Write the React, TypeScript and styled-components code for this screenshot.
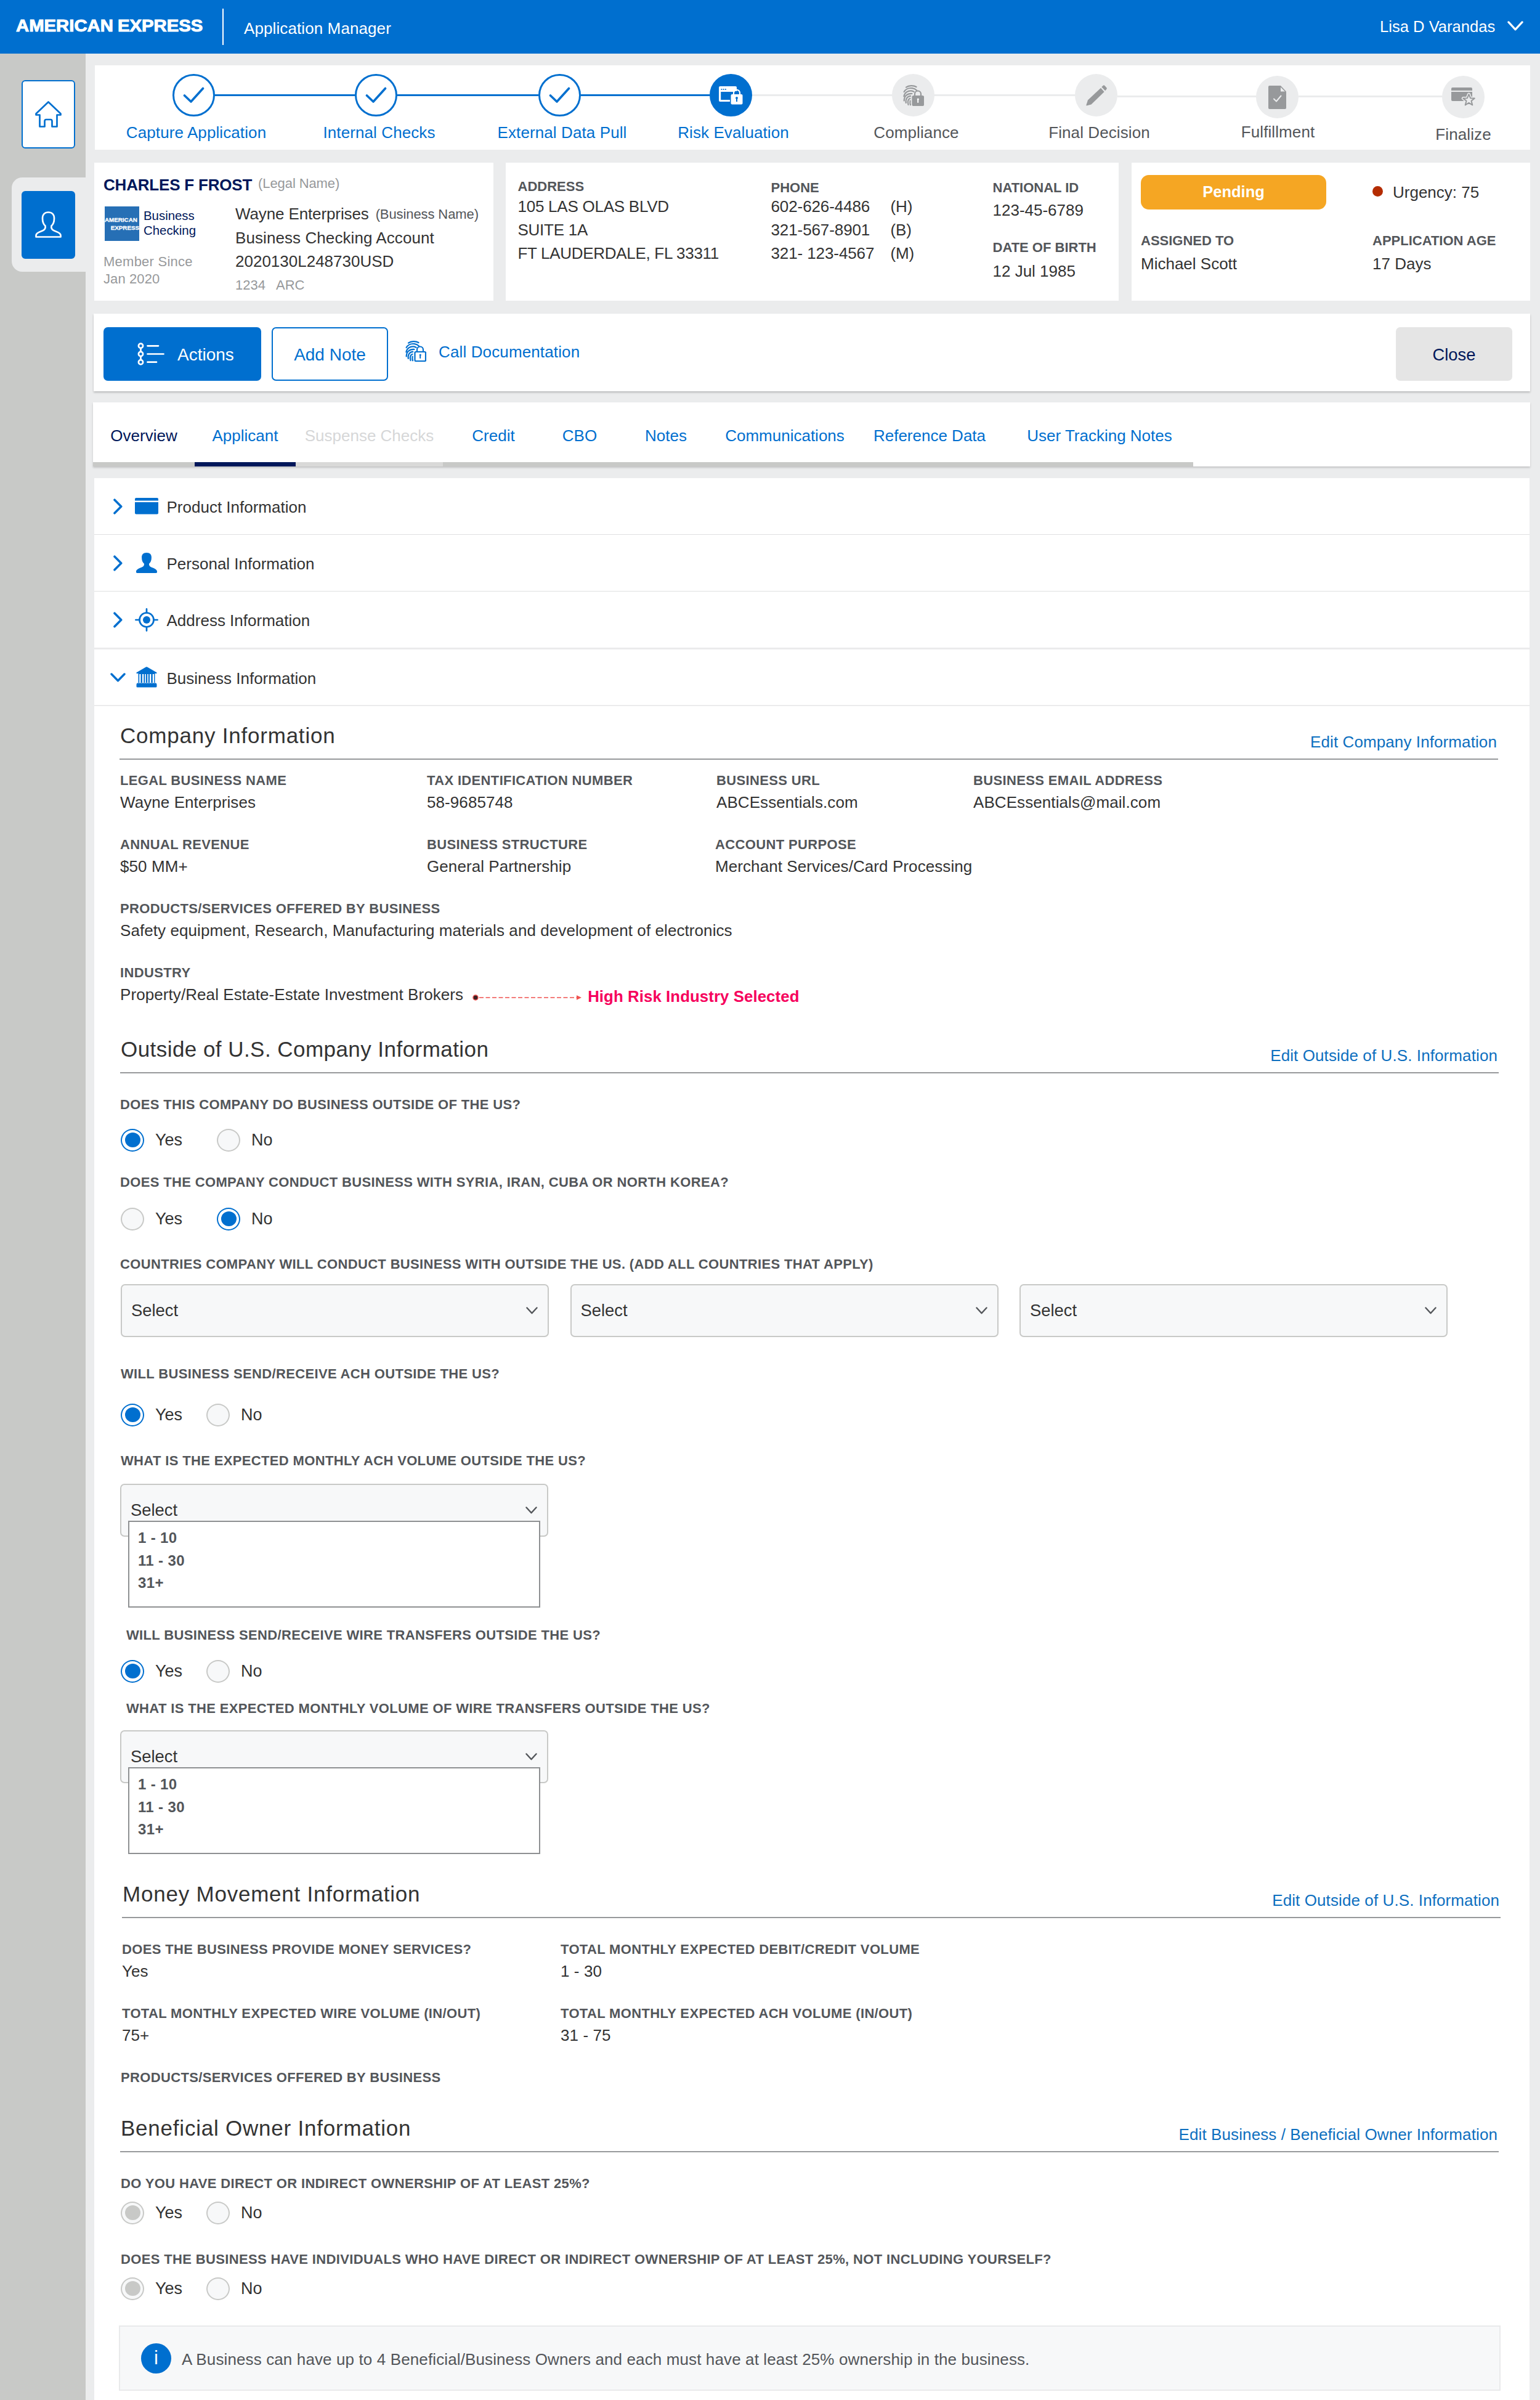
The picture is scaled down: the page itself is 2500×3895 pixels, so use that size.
import React from 'react';
import styled, { createGlobalStyle, css } from 'styled-components';

const c = {
  blue: '#006fcf',
  navy: '#00175a',
  link: '#0d6fbf',
  text: '#333333',
  label: '#53565a',
  muted: '#97999b',
  page: '#ebeced',
  rail: '#c8c9c7',
  field: '#f7f8f9',
  amber: '#f5a623',
  alert: '#f6005c',
};

const GlobalStyle = createGlobalStyle`
  * { box-sizing: border-box; }
  html, body { margin: 0; padding: 0; }
  body {
    width: 2500px;
    background: ${c.page};
    color: ${c.text};
    font-family: "Liberation Sans", Arial, Helvetica, sans-serif;
    font-size: 26px;
    line-height: 30px;
  }
  svg { display: block; flex: none; }
`;

const Page = styled.div`
  display: flex;
  flex-direction: column;
  width: 2500px;
  height: 3895px;
  overflow: hidden;
`;

/* ---------- header ---------- */

const Header = styled.header`
  display: flex;
  flex: none;
  height: 87px;
  padding-left: 26px;
  background: ${c.blue};
  color: #fff;
`;

const Wordmark = styled.div`
  width: 335px;
  line-height: 85px;
  font-size: 27px;
  font-weight: 700;
  white-space: nowrap;
  transform: scaleX(1.085);
  transform-origin: left;
  -webkit-text-stroke: 1px #fff;
  word-spacing: -1px;
`;

const HeaderRule = styled.div`
  width: 2px;
  height: 59px;
  margin-top: 14px;
  background: #fff;
`;

const AppName = styled.div`
  flex: 1;
  padding-left: 33px;
  line-height: 93px;
  letter-spacing: 0.1px;
`;

const UserMenu = styled.div`
  display: flex;
  width: 260px;
  font-size: 25.6px;
  line-height: 86px;
  white-space: nowrap;
  svg { margin: 34px 0 0 20px; }
`;

/* ---------- shell ---------- */

const Body = styled.div`
  display: flex;
  flex: 1;
  min-height: 0;
`;

const Sidebar = styled.nav`
  display: flex;
  flex-direction: column;
  align-items: flex-end;
  width: 139px;
  padding-top: 43px;
  background: ${c.rail};
`;

const RailButton = styled.div<{ $filled?: boolean }>`
  display: flex;
  align-items: center;
  justify-content: center;
  width: 87px;
  height: ${p => (p.$filled ? 110 : 111)}px;
  margin-right: 17px;
  border: 2px solid ${c.blue};
  border-radius: 6px;
  background: ${p => (p.$filled ? c.blue : '#fff')};
`;

const RailTab = styled.div`
  display: flex;
  align-items: center;
  justify-content: flex-end;
  width: 120px;
  height: 153px;
  margin-top: 47px;
  border-radius: 17px 0 0 17px;
  background: ${c.page};
`;

const Main = styled.main`
  display: flex;
  flex: 1;
  flex-direction: column;
  min-width: 0;
  padding: 19px 16px 0 12px;
`;

/* ---------- progress steps ---------- */

const StepsCard = styled.section`
  display: flex;
  flex: none;
  height: 137px;
  margin-left: 3px;
  padding: 14px 0 0 126px;
  background: #fff;
`;

type StepState = 'done' | 'current' | 'todo';

const StepItem = styled.div<{ $drop?: number }>`
  display: flex;
  flex: none;
  flex-direction: column;
  align-items: center;
  width: 69px;
  margin-top: ${p => p.$drop || 0}px;
`;

const StepCircle = styled.div<{ $state: StepState }>`
  display: flex;
  flex: none;
  align-items: center;
  justify-content: center;
  width: 69px;
  height: 69px;
  border-radius: 50%;
  border: ${p => (p.$state === 'todo' ? 'none' : `3px solid ${c.blue}`)};
  background: ${p => ({ done: '#fff', current: c.blue, todo: '#ebeced' })[p.$state]};
`;

const StepLabel = styled.div<{ $state: StepState; $nudge: number; $gap: number }>`
  margin-top: ${p => p.$gap}px;
  margin-left: ${p => p.$nudge * 2}px;
  color: ${p => (p.$state === 'todo' ? c.label : c.blue)};
  letter-spacing: 0.1px;
  white-space: nowrap;
`;

const Connector = styled.div<{ $w: number; $done?: boolean; $drop?: number }>`
  flex: none;
  width: ${p => p.$w}px;
  height: 3px;
  margin-top: ${p => 33 + (p.$drop || 0)}px;
  background: ${p => (p.$done ? c.blue : '#ebeced')};
`;

/* ---------- summary cards ---------- */

const Summary = styled.section`
  display: flex;
  flex: none;
  height: 224px;
  margin: 21px 0 0 2px;
`;

const Card = styled.div<{ $w: number; $pad: number; $ml?: number; $row?: boolean }>`
  display: flex;
  flex: none;
  flex-direction: ${p => (p.$row ? 'row' : 'column')};
  width: ${p => p.$w}px;
  margin-left: ${p => p.$ml || 0}px;
  padding-left: ${p => p.$pad}px;
  background: #fff;
`;

const Row = styled.div`
  display: flex;
`;

const Column = styled.div<{ $w: number }>`
  flex: none;
  width: ${p => p.$w}px;
`;

const Line = styled.div<{ $mt?: number; $ml?: number; $lh?: number; $ls?: number }>`
  margin-top: ${p => p.$mt || 0}px;
  margin-left: ${p => p.$ml || 0}px;
  line-height: ${p => p.$lh || 30}px;
  letter-spacing: ${p => p.$ls || 0}px;
  white-space: nowrap;
`;

const Name = styled(Line)`
  color: ${c.navy};
  font-weight: 700;
`;

const Small = styled(Line)<{ $dark?: boolean }>`
  color: ${p => (p.$dark ? c.label : c.muted)};
  font-size: 22px;
`;

const Caption = styled(Line)`
  color: ${c.label};
  font-size: 22px;
  font-weight: 700;
`;

const PhoneLine = styled(Line)`
  display: grid;
  grid-template-columns: 194px auto;
`;

const LogoRow = styled.div`
  display: flex;
  height: 56px;
  margin: 20px 0 0 2px;
`;

const BlueBox = styled.div`
  display: flex;
  flex-direction: column;
  justify-content: center;
  width: 56px;
  height: 56px;
  background: #266fb5;
  color: #fff;
  font-size: 9.8px;
  font-weight: 700;
  line-height: 13px;
  -webkit-text-stroke: 0.3px #fff;
  span:last-child { text-align: right; }
`;

const ProductName = styled.div`
  margin: 4px 0 0 7px;
  color: ${c.navy};
  font-size: 20.4px;
  line-height: 23.5px;
`;

const StatusPill = styled.div`
  width: 301px;
  height: 56px;
  border-radius: 13px;
  background: ${c.amber};
  color: #fff;
  font-size: 25.5px;
  font-weight: 700;
  line-height: 55px;
  text-align: center;
`;

const StatusGrid = styled.div`
  display: grid;
  grid-template-columns: 376px auto;
  padding-top: 20px;
`;

const Urgency = styled.div`
  display: flex;
  align-items: center;
  height: 55px;
`;

const Dot = styled.div`
  width: 17px;
  height: 17px;
  margin: -2px 16px 0 0;
  border-radius: 50%;
  background: #b42c01;
`;

/* ---------- toolbar ---------- */

const Toolbar = styled.section`
  display: flex;
  flex: none;
  height: 126px;
  margin: 21px 0 0 1px;
  padding: 22px 29px 0 16px;
  background: #fff;
  box-shadow: 0 2px 3px rgba(0, 0, 0, 0.22);
`;

const Button = styled.div<{ $w: number; $kind: 'primary' | 'outline' | 'quiet' }>`
  display: flex;
  align-items: center;
  justify-content: center;
  flex: none;
  width: ${p => p.$w}px;
  height: 87px;
  border-radius: 7px;
  font-size: 28px;
  line-height: 32px;
  ${p =>
    ({
      primary: css`
        justify-content: flex-start;
        gap: 21px;
        padding-left: 55px;
        background: ${c.blue};
        color: #fff;
      `,
      outline: css`
        margin-left: 17px;
        border: 2px solid ${c.blue};
        background: #fff;
        color: ${c.blue};
      `,
      quiet: css`
        margin-left: auto;
        background: #e5e5e5;
        color: ${c.navy};
        font-size: 27.3px;
      `,
    })[p.$kind]}
  span { margin-top: 2px; }
`;

const ToolLink = styled.div`
  display: flex;
  height: 34px;
  margin: 22px 0 0 28px;
  color: ${c.blue};
  span {
    margin: 3px 0 0 20px;
    letter-spacing: 0.13px;
  }
`;

/* ---------- tabs ---------- */

const Tabs = styled.nav`
  display: flex;
  flex: none;
  height: 104px;
  margin-top: 18px;
  background: #fff;
  box-shadow: 0 2px 3px rgba(0, 0, 0, 0.18);
`;

type TabTone = 'link' | 'visited' | 'active' | 'disabled';

const Tab = styled.div<{ $w: number; $tone: TabTone }>`
  flex: none;
  width: ${p => p.$w}px;
  height: 104px;
  padding-top: 39px;
  border-bottom: 7px solid
    ${p => ({ link: c.rail, visited: c.rail, active: c.navy, disabled: '#d9d9d8' })[p.$tone]};
  color: ${p => ({ link: c.blue, visited: c.navy, active: c.blue, disabled: '#d6d7d8' })[p.$tone]};
  text-align: center;
  white-space: nowrap;
`;

/* ---------- accordion panel ---------- */

const Panel = styled.section`
  display: flex;
  flex: 1;
  flex-direction: column;
  min-height: 0;
  margin: 19px 1px 0 2px;
  background: #fff;
`;

const AccordionRow = styled.div<{ $h: number; $line: number }>`
  display: flex;
  flex: none;
  align-items: center;
  height: ${p => p.$h}px;
  padding-left: 26px;
  border-bottom: ${p => p.$line}px solid ${p => (p.$line === 1 ? '#dfe0e1' : '#ebebec')};
`;

const IconSlot = styled.div<{ $w: number; $gap: number }>`
  display: flex;
  justify-content: center;
  width: ${p => p.$w}px;
  margin-right: ${p => p.$gap}px;
`;

const AccordionTitle = styled.div`
  margin-top: 3px;
`;

const Content = styled.div`
  display: flex;
  flex-direction: column;
  padding: 23px 0 0 42px;
`;

const SectionHead = styled.div<{ $mt?: number; $ml?: number }>`
  display: flex;
  justify-content: space-between;
  width: 2238px;
  height: 64px;
  margin: ${p => p.$mt || 0}px 0 0 ${p => p.$ml || 0}px;
  border-bottom: 2px solid #97999b;
`;

const SectionTitle = styled.h2<{ $ls: number }>`
  margin: 7px 0 0 1px;
  font-size: 35px;
  font-weight: 400;
  line-height: 36px;
  letter-spacing: ${p => p.$ls}px;
`;

const EditLink = styled.a`
  margin-top: 20px;
  margin-right: 2px;
  color: ${c.link};
  letter-spacing: 0.1px;
`;

const FieldRow = styled.div<{ $mt: number; $cols: string; $ml?: number }>`
  display: grid;
  grid-template-columns: ${p => p.$cols};
  height: 65px;
  margin: ${p => p.$mt}px 0 0 ${p => p.$ml || 0}px;
`;

const FieldLabel = styled.div<{ $mt?: number; $ml?: number }>`
  margin: ${p => p.$mt || 0}px 0 0 ${p => p.$ml || 0}px;
  color: ${c.label};
  font-size: 22px;
  font-weight: 700;
  line-height: 28px;
  letter-spacing: 0.35px;
  white-space: nowrap;
`;

const FieldValue = styled.div`
  display: flex;
  height: 30px;
  margin-top: 6px;
  letter-spacing: 0.08px;
  white-space: nowrap;
`;

const RiskFlag = styled.span`
  display: flex;
  align-items: center;
  height: 36px;
  margin-left: 15px;
  color: ${c.alert};
  font-size: 25.8px;
  font-weight: 700;
  svg { margin: 4px 9px 0 0; }
`;

const Radios = styled.div<{ $mt: number }>`
  display: flex;
  height: 38px;
  margin: ${p => p.$mt}px 0 0 1px;
`;

const RadioOption = styled.div<{ $w?: number }>`
  display: flex;
  align-items: center;
  width: ${p => (p.$w ? `${p.$w}px` : 'auto')};
  font-size: 27px;
`;

const RadioMark = styled.span<{ $tone: 'on' | 'off' | 'locked' }>`
  display: flex;
  align-items: center;
  justify-content: center;
  width: 38px;
  height: 37px;
  margin-right: 18px;
  border: 2px solid ${p => (p.$tone === 'on' ? c.blue : c.rail)};
  border-radius: 50%;
  background: ${p => (p.$tone === 'on' ? '#fff' : c.field)};
  &::after {
    content: '';
    width: 25px;
    height: 24px;
    border-radius: 50%;
    background: ${p => ({ on: c.blue, off: 'transparent', locked: c.rail })[p.$tone]};
  }
`;

const SelectRow = styled.div<{ $mt: number; $ml?: number }>`
  display: flex;
  gap: 34.5px;
  margin: ${p => p.$mt}px 0 0 ${p => p.$ml || 0}px;
`;

const SelectBox = styled.div`
  position: relative;
  display: flex;
  align-items: center;
  justify-content: space-between;
  width: 695px;
  height: 86px;
  padding: 0 16px 1px 15px;
  border: 2px solid ${c.rail};
  border-radius: 7px;
  background: ${c.field};
  font-size: 27.4px;
`;

const OptionList = styled.ul`
  position: absolute;
  top: 58px;
  left: 11px;
  width: 669px;
  height: 141px;
  margin: 0;
  padding: 8px 0 0 14px;
  border: 2px solid #8e9092;
  background: #fff;
  color: ${c.label};
  font-size: 24px;
  font-weight: 700;
  line-height: 36.6px;
  letter-spacing: 0.35px;
  list-style: none;
`;

const Notice = styled.div`
  display: flex;
  align-items: center;
  width: 2243px;
  height: 106px;
  margin: 41px 0 0 -2px;
  padding-left: 34px;
  border: 2px solid #e9eaeb;
  background: ${c.field};
  color: ${c.label};
  span { margin: 4px 0 0 17px; letter-spacing: 0.12px; }
`;

const InfoBadge = styled.div`
  width: 49px;
  height: 49px;
  border-radius: 50%;
  background: ${c.blue};
  color: #fff;
  font-size: 31px;
  line-height: 48px;
  text-align: center;
`;

/* ---------- icons ---------- */

const CheckIcon = () => (
  <svg width="35" height="27" viewBox="0 0 35 27" fill="none" stroke={c.blue} strokeWidth="3.6" strokeLinecap="round" strokeLinejoin="round">
    <path d="M2.5 14 L13 24 L32.5 2.5" />
  </svg>
);

const BrowserLockIcon = () => (
  <svg width="39" height="30" viewBox="0 0 39 30">
    <path d="M2 0H27a2 2 0 0 1 2 2V8h-3V9H3.2V22H18v3H2a2 2 0 0 1-2-2V2a2 2 0 0 1 2-2Z" fill="#fff" />
    <g fill={c.blue}>
      <circle cx="4.5" cy="5" r="1.1" /><circle cx="7.7" cy="5" r="1.1" /><circle cx="10.9" cy="5" r="1.1" />
    </g>
    <path d="M24 14v-3.2a5 5 0 0 1 10 0V14" fill="none" stroke="#fff" strokeWidth="2.2" />
    <rect x="19.5" y="13" width="19" height="16.5" rx="2" fill="#fff" />
    <path d="M29 17a2 2 0 0 1 1 3.7V25h-2v-4.3a2 2 0 0 1 1-3.7Z" fill={c.blue} />
  </svg>
);

const FingerprintLockIcon = ({ color, solid }: { color: string; solid?: boolean }) => (
  <svg width="34" height="34" viewBox="0 0 34 34" fill="none" stroke={color} strokeWidth="2.2" strokeLinecap="round">
    <path d="M5 3.6C9 .6 17 .3 21.5 3" />
    <path d="M1.6 11C5 5.6 11 4.6 15 5.2c3 .4 5.3 1.7 7 3.3" />
    <path d="M1.4 18.5C2.6 12 8 9.2 13 9.4c2 .1 3.5.7 4.6 1.5" />
    <path d="M1.7 25.500C1.8 18 6.5 13.600 14.5 14" />
    <path d="M4.800 29C3.600 22.500 7 18 12.200 17.800" />
    <path d="M8.500 32C7 27 8 22.800 11.500 21.800" />
    <path d="M12 32.300C11.200 29.500 11.100 27.500 11.600 25.500" />
    <path d="M19 17.500v-3a5 5 0 0 1 10 0v3" />
    <rect x="15.500" y="18" width="17.500" height="15" rx="1.500" fill={solid ? color : '#fff'} />
    <path d="M24.200 23v5" stroke={solid ? '#fff' : color} strokeWidth="2" />
    <circle cx="24.200" cy="23" r="1" fill={solid ? '#fff' : color} stroke={solid ? '#fff' : color} strokeWidth="1" />
  </svg>
);

const PencilIcon = () => (
  <svg width="34" height="34" viewBox="0 0 34 34" fill={c.muted}>
    <path d="M24 4.800 29.600 11 8.500 31.500 1 33.500q-.8 0-.6-1L3 24.500Z" />
    <path d="M25.300 3.300 27.800.8q1.200-1 2.500.1l3 3.400q1 1.200 0 2.400L31.200 9.300Z" />
  </svg>
);

const DocCheckIcon = () => (
  <svg width="29" height="38" viewBox="0 0 29 38">
    <path d="M2 0H20L29 9.500V36a2 2 0 0 1-2 2H2a2 2 0 0 1-2-2V2A2 2 0 0 1 2 0Z" fill={c.muted} />
    <path d="M20 2.500V9.500H27Z" fill="#ebeced" />
    <path d="M9 21.500 13 25.500 20.500 16.500" fill="none" stroke="#ebeced" strokeWidth="2" strokeLinecap="round" strokeLinejoin="round" />
  </svg>
);

const starShape = 'M28.500 11 31 17.200 37.700 17.600 32.500 21.800 34.300 28.500 28.500 24.800 22.700 28.500 24.500 21.800 19.300 17.600 26 17.200Z';

const CardStarIcon = () => (
  <svg width="39" height="31" viewBox="0 0 39 31">
    <path d="M2 0H32a2 2 0 0 1 2 2V5H0V2A2 2 0 0 1 2 0Z" fill={c.muted} />
    <path d="M0 7H34V22H2a2 2 0 0 1-2-2Z" fill={c.muted} />
    <path d={starShape} fill="#ebeced" stroke="#ebeced" strokeWidth="5" strokeLinejoin="round" />
    <path d={starShape} fill="#ebeced" stroke={c.muted} strokeWidth="2" strokeLinejoin="round" />
  </svg>
);

const HomeIcon = () => (
  <svg width="43" height="43" viewBox="0 0 43 43" fill="none" stroke={c.blue} strokeWidth="2.700" strokeLinejoin="round" strokeLinecap="round">
    <path d="M21.500 1.500 41.500 20.500V22.500H35.500V41.500H27.500V32.500Q27.500 30 25 30H18Q15.500 30 15.500 32.500V41.500H7.500V22.500H1.500V20.500Z" />
  </svg>
);

const UserIcon = () => (
  <svg width="43" height="43" viewBox="0 0 43 43" fill="none" stroke="#fff" strokeWidth="2.700" strokeLinejoin="round">
    <path d="M21.500 1.500C15.500 1.500 12 5.500 12 11.500C12 17 13.500 21 16.500 23.500C17.500 28 15.500 30.500 9.500 32.500C4 34.500 1.500 36.500 1.500 39V41.500H41.500V39C41.500 36.500 39 34.500 33.500 32.500C27.500 30.500 25.500 28 26.500 23.500C29.500 21 31 17 31 11.500C31 5.500 27.500 1.500 21.500 1.500Z" />
  </svg>
);

const ListIcon = () => (
  <svg width="44" height="37" viewBox="0 0 44 37" fill="none" stroke="#fff" strokeWidth="2.700" strokeLinecap="round">
    <circle cx="5.500" cy="5.300" r="3.600" /><circle cx="5.500" cy="18.500" r="3.600" /><circle cx="5.500" cy="31.700" r="3.600" />
    <path d="M5.500 9.500V14.500M5.500 22.500V27.500M16.500 5.300H34M16.500 18.500H42.500M16.500 31.700H31" />
  </svg>
);

const ChevronRight = () => (
  <svg width="15" height="26" viewBox="0 0 15 26" fill="none" stroke={c.blue} strokeWidth="3.600" strokeLinecap="round" strokeLinejoin="round">
    <path d="M2 2.200 12.700 13 2 23.800" />
  </svg>
);

const ChevronDown = ({ w, h, color, stroke }: { w: number; h: number; color: string; stroke: number }) => (
  <svg width={w} height={h} viewBox={`0 0 ${w} ${h}`} fill="none" stroke={color} strokeWidth={stroke} strokeLinecap="round" strokeLinejoin="round">
    <path d={`M${stroke / 2 + 0.3} ${stroke / 2 + 0.3} L${w / 2} ${h - stroke / 2 - 0.5} L${w - stroke / 2 - 0.3} ${stroke / 2 + 0.3}`} />
  </svg>
);

const CardIcon = () => (
  <svg width="38" height="27" viewBox="0 0 38 27" fill={c.blue}>
    <path d="M2 0H36a2 2 0 0 1 2 2V4.500H0V2A2 2 0 0 1 2 0Z" />
    <path d="M0 7H38V24.500a2 2 0 0 1-2 2H2a2 2 0 0 1-2-2Z" />
  </svg>
);

const PersonIcon = () => (
  <svg width="34" height="33" viewBox="0 0 43 43" preserveAspectRatio="none" fill={c.blue}>
    <path d="M21.500 0C14.500 0 11.500 4 11.500 10C11.500 16 13 20 16.500 23.500C16.500 28 14.500 30 8.500 32C2.500 34.500 0 37 0 40V41.500Q0 43 2 43H41Q43 43 43 41.500V40C43 37 40.500 34.500 34.500 32C28.500 30 26.500 28 26.500 23.500C30 20 31.500 16 31.500 10C31.500 4 28.500 0 21.500 0Z" />
  </svg>
);

const TargetIcon = () => (
  <svg width="38" height="38" viewBox="0 0 38 38" fill="none" stroke={c.blue} strokeWidth="2.700" strokeLinecap="round">
    <circle cx="19" cy="19" r="11.500" />
    <circle cx="19" cy="19" r="6" fill={c.blue} stroke="none" />
    <path d="M19 1.400V7.500M19 30.500V36.600M1.400 19H7.500M30.500 19H36.600" />
  </svg>
);

const BankIcon = () => (
  <svg width="34" height="34" viewBox="0 0 34 34" fill={c.blue}>
    <path d="M17 .3Q17.600.2 18.500.7L33.500 9.500V11H30.500V26H3.500V11H.5V9.500L15.500.7Q16.400.2 17 .3Z" />
    <path d="M5.200 12h2.300v14H5.200zM10 12h2.300v14H10zM14.300 12h1.600v14h-1.600zM18.200 12h1.600v14h-1.600zM22 12h2.300v14H22zM26.800 12h2.300v14h-2.300z" fill="#fff" />
    <path d="M2 26.500H32Q33.500 27 33.500 29V32Q33.500 33.500 32 33.500H2Q.5 33.500.5 32V29Q.5 27 2 26.500Z" />
  </svg>
);

const RiskArrow = () => (
  <svg width="178" height="10" viewBox="0 0 178 10">
    <circle cx="5" cy="5" r="4" fill="#3a2326" stroke="#f0524f" strokeWidth="1.500" />
    <path d="M11 5H170" stroke="#f0524f" strokeWidth="1.600" strokeDasharray="7 3.500" />
    <path d="M169 1.200 177 5 169 8.800Z" fill="#f0524f" />
  </svg>
);

/* ---------- composed parts ---------- */

type Step = { label: string; state: StepState; icon: React.ReactNode; nudge: number; drop?: number; gap?: number; next?: number };

const steps: Step[] = [
  { label: 'Capture Application', state: 'done', icon: <CheckIcon />, nudge: 4, next: 227 },
  { label: 'Internal Checks', state: 'done', icon: <CheckIcon />, nudge: 5, next: 229 },
  { label: 'External Data Pull', state: 'done', icon: <CheckIcon />, nudge: 4, next: 209 },
  { label: 'Risk Evaluation', state: 'current', icon: <BrowserLockIcon />, nudge: 4, next: 227 },
  { label: 'Compliance', state: 'todo', icon: <FingerprintLockIcon color={c.muted} solid />, nudge: 5, next: 228 },
  { label: 'Final Decision', state: 'todo', icon: <PencilIcon />, nudge: 5, next: 225 },
  { label: 'Fulfillment', state: 'todo', icon: <DocCheckIcon />, nudge: 1, drop: 3, gap: 7, next: 233 },
  { label: 'Finalize', state: 'todo', icon: <CardStarIcon />, nudge: 0, drop: 3 },
];

const tabs: { label: string; w: number; tone: TabTone }[] = [
  { label: 'Overview', w: 165, tone: 'visited' },
  { label: 'Applicant', w: 164, tone: 'active' },
  { label: 'Suspense Checks', w: 239, tone: 'disabled' },
  { label: 'Credit', w: 164, tone: 'link' },
  { label: 'CBO', w: 116, tone: 'link' },
  { label: 'Notes', w: 164, tone: 'link' },
  { label: 'Communications', w: 222, tone: 'link' },
  { label: 'Reference Data', w: 248, tone: 'link' },
  { label: 'User Tracking Notes', w: 304, tone: 'link' },
];

const Field = ({ label, children }: { label: string; children?: React.ReactNode }) => (
  <div>
    <FieldLabel>{label}</FieldLabel>
    <FieldValue>{children}</FieldValue>
  </div>
);

const YesNo = ({ value, mt, wide, locked }: { value: 'Yes' | 'No'; mt: number; wide?: boolean; locked?: boolean }) => {
  const on = locked ? 'locked' : 'on';
  return (
    <Radios $mt={mt}>
      <RadioOption $w={wide ? 156 : 139}>
        <RadioMark $tone={value === 'Yes' ? on : 'off'} />
        Yes
      </RadioOption>
      <RadioOption>
        <RadioMark $tone={value === 'No' ? on : 'off'} />
        No
      </RadioOption>
    </Radios>
  );
};

const Select = ({ options }: { options?: string[] }) => (
  <SelectBox>
    Select
    <ChevronDown w={19} h={12} color={c.label} stroke={2.4} />
    {options && (
      <OptionList>
        {options.map(o => (
          <li key={o}>{o}</li>
        ))}
      </OptionList>
    )}
  </SelectBox>
);

const Head = ({ title, link, mt, ml, ls = 0.78 }: { title: string; link: string; mt?: number; ml?: number; ls?: number }) => (
  <SectionHead $mt={mt} $ml={ml}>
    <SectionTitle $ls={ls}>{title}</SectionTitle>
    <EditLink>{link}</EditLink>
  </SectionHead>
);

const AccordionItem = ({ icon, title, open, h = 92, line = 1 }: { icon: React.ReactNode; title: string; open?: boolean; h?: number; line?: number }) => (
  <AccordionRow $h={h} $line={line}>
    <IconSlot $w={24} $gap={14}>
      {open ? <ChevronDown w={25} h={15} color={c.blue} stroke={3.4} /> : <ChevronRight />}
    </IconSlot>
    <IconSlot $w={41} $gap={12.5}>{icon}</IconSlot>
    <AccordionTitle>{title}</AccordionTitle>
  </AccordionRow>
);

const volumes = ['1 - 10', '11 - 30', '31+'];

export default function App() {
  return (
    <Page>
      <GlobalStyle />
      <Header>
        <Wordmark>AMERICAN EXPRESS</Wordmark>
        <HeaderRule />
        <AppName>Application Manager</AppName>
        <UserMenu>
          Lisa D Varandas
          <ChevronDown w={26} h={16} color="#fff" stroke={3.2} />
        </UserMenu>
      </Header>

      <Body>
        <Sidebar>
          <RailButton><HomeIcon /></RailButton>
          <RailTab>
            <RailButton $filled><UserIcon /></RailButton>
          </RailTab>
        </Sidebar>

        <Main>
          <StepsCard>
            {steps.map((s, i) => (
              <React.Fragment key={s.label}>
                <StepItem $drop={s.drop}>
                  <StepCircle $state={s.state}>{s.icon}</StepCircle>
                  <StepLabel $state={s.state} $nudge={s.nudge} $gap={s.gap ?? 11}>{s.label}</StepLabel>
                </StepItem>
                {s.next && <Connector $w={s.next} $done={i < 3} $drop={i > 4 ? 2 : 0} />}
              </React.Fragment>
            ))}
          </StepsCard>

          <Summary>
            <Card $w={648} $pad={15}>
              <Row>
                <Name $mt={21} $ls={-0.2}>CHARLES F FROST</Name>
                <Small $mt={19} $ml={10} $ls={-0.1}>(Legal Name)</Small>
              </Row>
              <Row>
                <Column $w={214}>
                  <LogoRow>
                    <BlueBox><span>AMERICAN</span><span>EXPRESS</span></BlueBox>
                    <ProductName>Business<br />Checking</ProductName>
                  </LogoRow>
                  <Small $mt={20} $lh={28} $ls={0.25}>Member Since</Small>
                  <Small $lh={28} $ls={0.1}>Jan 2020</Small>
                </Column>
                <div>
                  <Row>
                    <Line $mt={17} $ls={-0.12}>Wayne Enterprises</Line>
                    <Small $mt={18} $ml={11} $ls={-0.1} $dark>(Business Name)</Small>
                  </Row>
                  <Line $mt={8} $ls={0.08}>Business Checking Account</Line>
                  <Line $mt={8}>2020130L248730USD</Line>
                  <Row>
                    <Small $mt={9}>1234</Small>
                    <Small $mt={9} $ml={17}>ARC</Small>
                  </Row>
                </div>
              </Row>
            </Card>

            <Card $w={995} $pad={19.5} $ml={20} $row>
              <Column $w={411}>
                <Caption $mt={24}>ADDRESS</Caption>
                <Line $mt={2} $ls={-0.25}>105 LAS OLAS BLVD</Line>
                <Line $mt={8} $ls={-0.25}>SUITE 1A</Line>
                <Line $mt={8} $ls={-0.3}>FT LAUDERDALE, FL 33311</Line>
              </Column>
              <Column $w={360}>
                <Caption $mt={26}>PHONE</Caption>
                <PhoneLine $ls={-0.1}><span>602-626-4486</span><span>(H)</span></PhoneLine>
                <PhoneLine $mt={8} $ls={-0.1}><span>321-567-8901</span><span>(B)</span></PhoneLine>
                <PhoneLine $mt={8} $ls={-0.1}><span>321- 123-4567</span><span>(M)</span></PhoneLine>
              </Column>
              <Column $w={190}>
                <Caption $mt={26}>NATIONAL ID</Caption>
                <Line $mt={6}>123-45-6789</Line>
                <Caption $mt={31}>DATE OF BIRTH</Caption>
                <Line $mt={8}>12 Jul 1985</Line>
              </Column>
            </Card>

            <Card $w={647} $pad={15} $ml={21}>
              <StatusGrid>
                <StatusPill>Pending</StatusPill>
                <Urgency><Dot />Urgency: 75</Urgency>
                <Caption $mt={36}>ASSIGNED TO</Caption>
                <Caption $mt={36}>APPLICATION AGE</Caption>
                <Line $mt={7}>Michael Scott</Line>
                <Line $mt={7}>17 Days</Line>
              </StatusGrid>
            </Card>
          </Summary>

          <Toolbar>
            <Button $w={256} $kind="primary">
              <ListIcon />
              <span>Actions</span>
            </Button>
            <Button $w={189} $kind="outline"><span>Add Note</span></Button>
            <ToolLink>
              <FingerprintLockIcon color={c.blue} />
              <span>Call Documentation</span>
            </ToolLink>
            <Button $w={189} $kind="quiet"><span>Close</span></Button>
          </Toolbar>

          <Tabs>
            {tabs.map(t => (
              <Tab key={t.label} $w={t.w} $tone={t.tone}>{t.label}</Tab>
            ))}
          </Tabs>

          <Panel>
            <AccordionItem icon={<CardIcon />} title="Product Information" />
            <AccordionItem icon={<PersonIcon />} title="Personal Information" />
            <AccordionItem icon={<TargetIcon />} title="Address Information" h={94} line={3} />
            <AccordionItem icon={<BankIcon />} title="Business Information" line={2} open />

            <Content>
              <Head title="Company Information" link="Edit Company Information" ml={-1} />
              <FieldRow $mt={20} $cols="498px 470px 417px auto">
                <Field label="LEGAL BUSINESS NAME">Wayne Enterprises</Field>
                <Field label="TAX IDENTIFICATION NUMBER">58-9685748</Field>
                <Field label="BUSINESS URL">ABCEssentials.com</Field>
                <Field label="BUSINESS EMAIL ADDRESS">ABCEssentials@mail.com</Field>
              </FieldRow>
              <FieldRow $mt={39} $cols="498px 468px auto">
                <Field label="ANNUAL REVENUE">$50 MM+</Field>
                <Field label="BUSINESS STRUCTURE">General Partnership</Field>
                <Field label="ACCOUNT PURPOSE">Merchant Services/Card Processing</Field>
              </FieldRow>
              <FieldRow $mt={39} $cols="auto">
                <Field label="PRODUCTS/SERVICES OFFERED BY BUSINESS">
                  Safety equipment, Research, Manufacturing materials and development of electronics
                </Field>
              </FieldRow>
              <FieldRow $mt={39} $cols="auto">
                <Field label="INDUSTRY">
                  Property/Real Estate-Estate Investment Brokers
                  <RiskFlag><RiskArrow />High Risk Industry Selected</RiskFlag>
                </Field>
              </FieldRow>

              <Head title="Outside of U.S. Company Information" link="Edit Outside of U.S. Information" mt={48} ls={0.45} />
              <FieldLabel $mt={37}>DOES THIS COMPANY DO BUSINESS OUTSIDE OF THE US?</FieldLabel>
              <YesNo value="Yes" mt={24} wide />
              <FieldLabel $mt={36}>DOES THE COMPANY CONDUCT BUSINESS WITH SYRIA, IRAN, CUBA OR NORTH KOREA?</FieldLabel>
              <YesNo value="No" mt={26} wide />
              <FieldLabel $mt={41}>COUNTRIES COMPANY WILL CONDUCT BUSINESS WITH OUTSIDE THE US. (ADD ALL COUNTRIES THAT APPLY)</FieldLabel>
              <SelectRow $mt={18} $ml={1}>
                <Select />
                <Select />
                <Select />
              </SelectRow>
              <FieldLabel $mt={46} $ml={1}>WILL BUSINESS SEND/RECEIVE ACH OUTSIDE THE US?</FieldLabel>
              <YesNo value="Yes" mt={33} />
              <FieldLabel $mt={42} $ml={1}>WHAT IS THE EXPECTED MONTHLY ACH VOLUME OUTSIDE THE US?</FieldLabel>
              <SelectRow $mt={23}>
                <Select options={volumes} />
              </SelectRow>
              <FieldLabel $mt={146} $ml={10}>WILL BUSINESS SEND/RECEIVE WIRE TRANSFERS OUTSIDE THE US?</FieldLabel>
              <YesNo value="Yes" mt={25} />
              <FieldLabel $mt={28} $ml={10}>WHAT IS THE EXPECTED MONTHLY VOLUME OF WIRE TRANSFERS OUTSIDE THE US?</FieldLabel>
              <SelectRow $mt={21}>
                <Select options={volumes} />
              </SelectRow>

              <Head title="Money Movement Information" link="Edit Outside of U.S. Information" mt={155} ml={3} />
              <FieldRow $mt={37} $cols="712px auto" $ml={3}>
                <Field label="DOES THE BUSINESS PROVIDE MONEY SERVICES?">Yes</Field>
                <Field label="TOTAL MONTHLY EXPECTED DEBIT/CREDIT VOLUME">1 - 30</Field>
              </FieldRow>
              <FieldRow $mt={39} $cols="712px auto" $ml={3}>
                <Field label="TOTAL MONTHLY EXPECTED WIRE VOLUME (IN/OUT)">75+</Field>
                <Field label="TOTAL MONTHLY EXPECTED ACH VOLUME (IN/OUT)">31 - 75</Field>
              </FieldRow>
              <FieldLabel $mt={39} $ml={1}>PRODUCTS/SERVICES OFFERED BY BUSINESS</FieldLabel>

              <Head title="Beneficial Owner Information" link="Edit Business / Beneficial Owner Information" mt={43} />
              <FieldLabel $mt={37} $ml={1}>DO YOU HAVE DIRECT OR INDIRECT OWNERSHIP OF AT LEAST 25%?</FieldLabel>
              <YesNo value="Yes" mt={14} locked />
              <FieldLabel $mt={43} $ml={1}>
                DOES THE BUSINESS HAVE INDIVIDUALS WHO HAVE DIRECT OR INDIRECT OWNERSHIP OF AT LEAST 25%, NOT INCLUDING YOURSELF?
              </FieldLabel>
              <YesNo value="Yes" mt={14} locked />
              <Notice>
                <InfoBadge>i</InfoBadge>
                <span>A Business can have up to 4 Beneficial/Business Owners and each must have at least 25% ownership in the business.</span>
              </Notice>
            </Content>
          </Panel>
        </Main>
      </Body>
    </Page>
  );
}
